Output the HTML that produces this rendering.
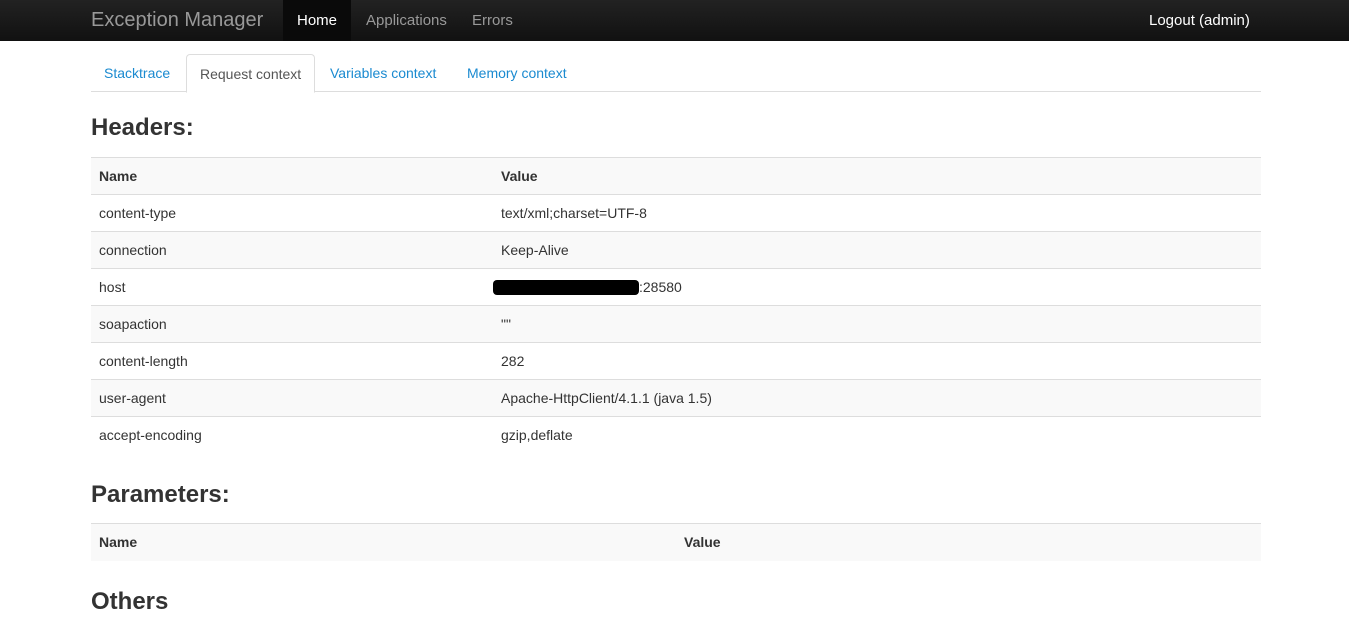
<!DOCTYPE html>
<html><head><style>
*{box-sizing:border-box}
body{margin:0;font-family:"Liberation Sans",sans-serif;font-size:14px;color:#333;background:#fff}
.nav{position:absolute;left:0;top:0;width:1349px;height:41px;background:linear-gradient(#222,#111);}
.nav span{position:absolute;top:0;line-height:41px;color:#999;font-size:15px}
.brand{left:91px;font-size:20px!important;color:#999}
.home{left:283px;width:68px;background:#0a0a0a;color:#fff!important;text-align:center}
.tabs{position:absolute;left:91px;top:54px;width:1170px;height:38px;border-bottom:1px solid #ddd}
.tabs span{position:absolute;top:0;height:38px;line-height:38px;color:#1a8ad0;font-size:14px}
.tabs .act{color:#555;border:1px solid #ddd;border-bottom-color:#fff;border-radius:4px 4px 0 0;background:#fff;height:39px;padding:0 13px;left:95px}
h2{position:absolute;left:91px;margin:0;font-size:24px;font-weight:bold;color:#333}
.t{position:absolute;left:91px;width:1170px;border-collapse:collapse}
.t td,.t th{height:37px;padding:0 8px;text-align:left;border-top:1px solid #ddd;font-size:14px}
.t th{font-weight:bold}
.g{background:#f9f9f9}
</style></head><body>
<div class="nav">
<span class="brand">Exception Manager</span>
<span class="home">Home</span>
<span style="left:366px">Applications</span>
<span style="left:472px">Errors</span>
<span style="left:1149px;color:#fff">Logout (admin)</span>
</div>
<div class="tabs">
<span style="left:13px">Stacktrace</span>
<span class="act">Request context</span>
<span style="left:239px">Variables context</span>
<span style="left:376px">Memory context</span>
</div>
<h2 style="top:114px">Headers:</h2>
<table class="t" style="top:157px">
<tr class="g"><th style="width:402px">Name</th><th>Value</th></tr>
<tr><td>content-type</td><td>text/xml;charset=UTF-8</td></tr>
<tr class="g"><td>connection</td><td>Keep-Alive</td></tr>
<tr><td>host</td><td><span style="display:inline-block;width:146px;height:15px;background:#000;border-radius:4px;vertical-align:middle;margin-left:-8px"></span>:28580</td></tr>
<tr class="g"><td>soapaction</td><td>""</td></tr>
<tr><td>content-length</td><td>282</td></tr>
<tr class="g"><td>user-agent</td><td>Apache-HttpClient/4.1.1 (java 1.5)</td></tr>
<tr><td>accept-encoding</td><td>gzip,deflate</td></tr>
</table>
<h2 style="top:481px">Parameters:</h2>
<table class="t" style="top:523px">
<tr class="g"><th style="width:585px">Name</th><th>Value</th></tr>
</table>
<h2 style="top:588px">Others</h2>
</body></html>
